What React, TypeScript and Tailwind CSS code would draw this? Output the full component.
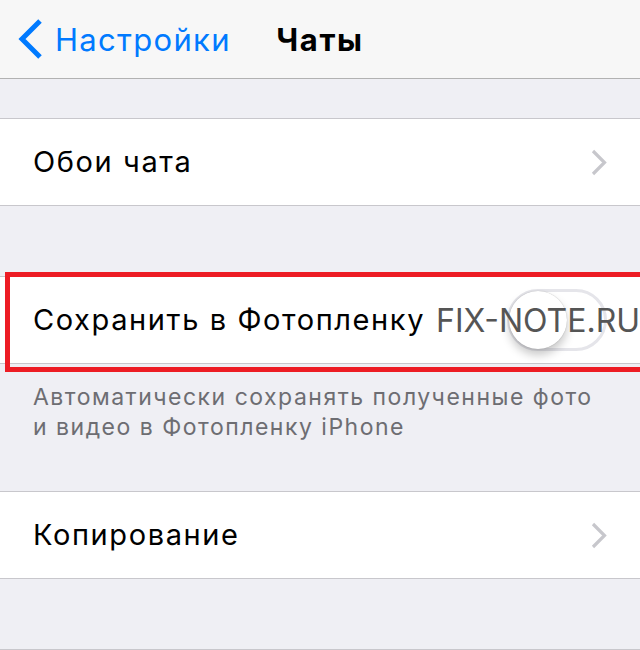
import React from "react";

const Chevron = () => (
  <svg width="16" height="27" viewBox="0 0 16 27" className="shrink-0">
    <path d="M2 2 L13.5 13.5 L2 25" fill="none" stroke="#c7c7cc" strokeWidth="3.2" />
  </svg>
);

const Row = ({ label, children }: { label: string; children?: React.ReactNode }) => (
  <div className="h-[88px] bg-white border-y border-[#c8c7cc] flex items-center pl-[33px] pr-[33px]">
    <span className="flex-1 text-[29px] tracking-[1.6px] text-black">{label}</span>
    {children}
  </div>
);

const Switch = () => (
  <div className="relative w-[100px] h-[62px] rounded-full border-[3px] border-[#e5e5ea] bg-white">
    <div className="absolute left-[-1px] top-[-1px] w-[58px] h-[58px] rounded-full bg-white shadow-[0_6px_10px_rgba(0,0,0,0.22),0_0_1px_rgba(0,0,0,0.3)]" />
  </div>
);

export default function App() {
  return (
    <div className="w-[640px] h-[650px] overflow-hidden bg-[#efeff4] font-['Inter','Liberation_Sans',sans-serif]">
      {/* nav bar */}
      <div className="relative h-[79px] bg-[#f7f7f7] border-b border-[#b2b2b2] flex items-center">
        <div className="flex items-center pl-[17px] gap-[12px] text-[#007aff]">
          <svg width="26" height="42" viewBox="0 0 26 42">
            <path d="M23 3 L5 21 L23 39" fill="none" stroke="#007aff" strokeWidth="5" />
          </svg>
          <span className="text-[31px] tracking-[1.3px] leading-none">Настройки</span>
        </div>
        <span className="absolute left-0 right-0 text-center text-[31px] tracking-[1.6px] font-bold leading-none">Чаты</span>
      </div>

      <div className="h-[39px]" />
      <Row label="Обои чата">
        <Chevron />
      </Row>

      <div className="h-[70px]" />
      <div className="relative">
        <Row label="Сохранить в Фотопленку">
          <Switch />
        </Row>
        {/* highlight frame */}
        <div className="absolute left-[5px] right-[-10px] top-[-4px] h-[100px] border-[5px] border-[#ed1c24]" />
        <span className="absolute left-[436px] top-[29px] text-[32px] leading-none text-[#555555] whitespace-nowrap">FIX-NOTE.RU</span>
      </div>

      <div className="pt-[18px] pb-[49px] pl-[33px] pr-[20px] text-[23px] tracking-[1.5px] leading-[30px] text-[#6d6d72] whitespace-nowrap">
        Автоматически сохранять полученные фото
        <br />
        и видео в Фотопленку iPhone
      </div>

      <Row label="Копирование">
        <Chevron />
      </Row>

      <div className="h-[70px]" />
      <div className="h-[20px] bg-white border-t border-[#c8c7cc]" />
    </div>
  );
}
